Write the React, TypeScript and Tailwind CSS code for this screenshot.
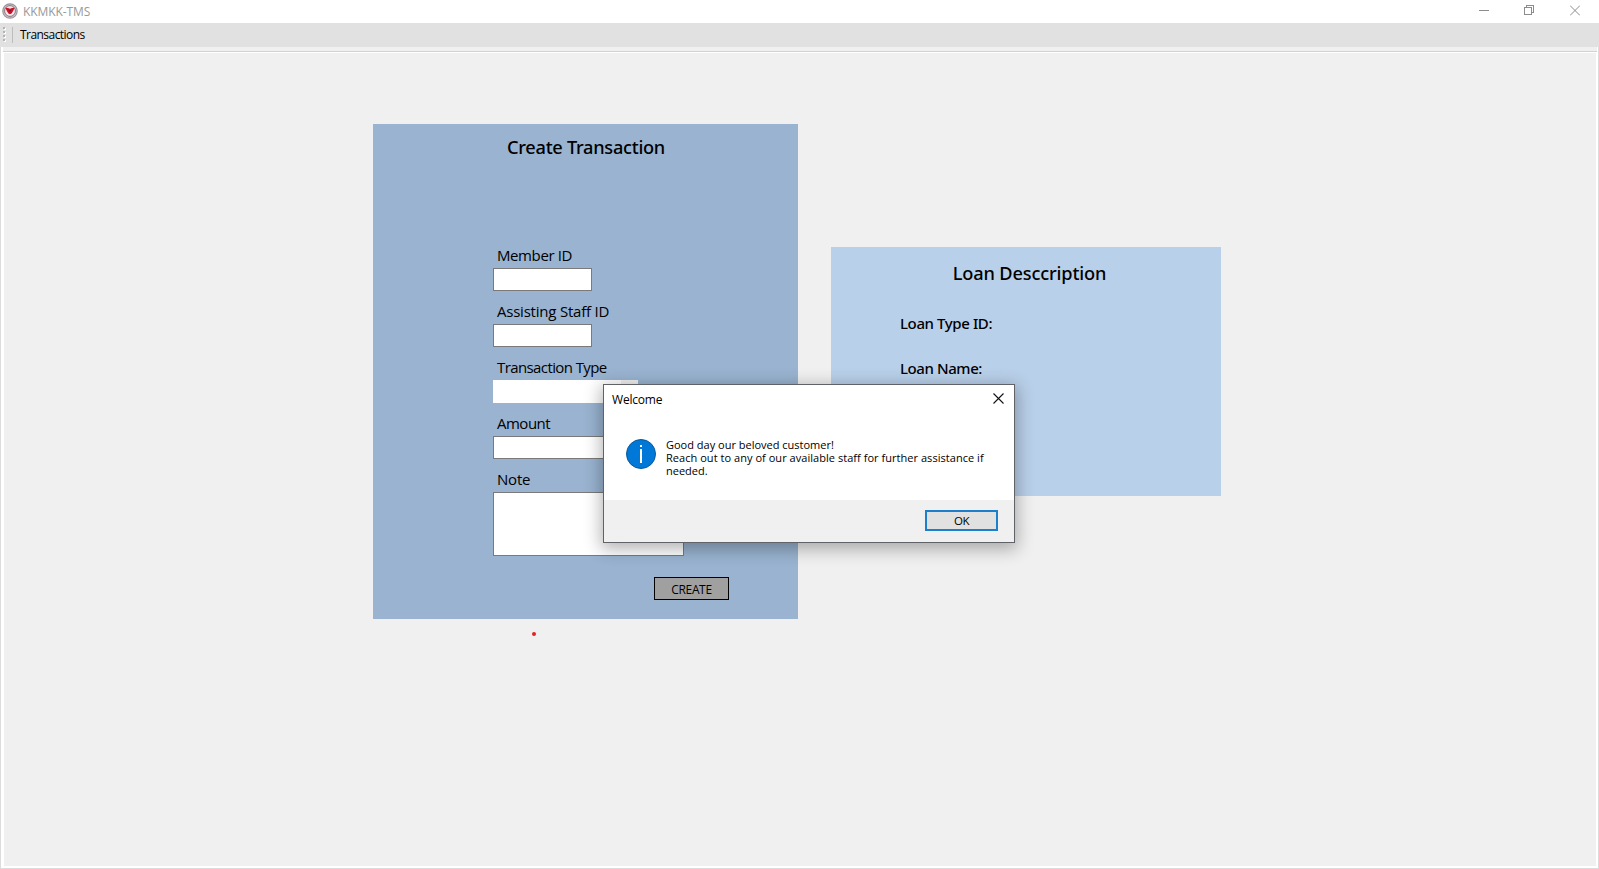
import React from "react";

function TextField({ label, labelClass, children }: { label: string; labelClass: string; children: React.ReactNode }) {
  return (
    <div className="flex flex-col">
      <label className={`h-[22px] pl-1 text-[15px] leading-[18px] whitespace-nowrap ${labelClass}`}>{label}</label>
      {children}
    </div>
  );
}

function AppLogo() {
  return (
    <svg className="size-4" viewBox="0 0 16 16">
      <circle cx="8" cy="8" r="7.2" fill="#c9c7ca" stroke="#98969b" strokeWidth="1.2" />
      <circle cx="8" cy="8" r="5.4" fill="#f1e9ec" stroke="#7d5a66" strokeWidth=".8" />
      <path d="M3.4 4.8 6 5l2 .8L10 5l2.600-.2-1.300 2.900L9.600 10.500 8 11.200l-1.600-.7-1.700-2.800Z" fill="#d01226" />
      <path d="M6.600 6.800 8 7.400l1.400-.6L8.800 8.600H7.200Z" fill="#7a1030" />
    </svg>
  );
}

export default function App() {
  return (
    <div className="relative flex h-[869px] w-[1599px] flex-col overflow-hidden bg-[#f0f0f0] font-['Open_Sans',sans-serif] text-black">
      <header className="flex h-[23px] shrink-0 items-center bg-white pl-[2px]">
        <div className="mb-px">
          <AppLogo />
        </div>
        <h1 className="ml-[5px] text-[12px] leading-4 tracking-[-0.1px] text-[#999]">KKMKK-TMS</h1>
        <div className="mr-[19px] mb-[2px] ml-auto flex items-center text-[#8c8c8c]">
          <svg className="h-[11px] w-[10px]" viewBox="0 0 10 11" fill="none" stroke="currentColor" shapeRendering="crispEdges">
            <path d="M0 5.5h10" />
          </svg>
          <svg className="mr-9 ml-[35px] h-[11px] w-[10px]" viewBox="0 0 10 11" fill="none" stroke="currentColor" shapeRendering="crispEdges">
            <path d="M.5 2.5h7v7h-7zM2.5 2.5v-2h7v7h-2" />
          </svg>
          <svg className="h-[11px] w-[10px]" viewBox="0 0 10 11" fill="none" stroke="currentColor">
            <path d="M0 .5l10 10M10 .5l-10 10" />
          </svg>
        </div>
      </header>

      <nav className="flex h-6 shrink-0 items-center bg-[#e1e1e1] pl-[3px]">
        <svg className="h-4 w-[3px]" viewBox="0 0 3 16" shapeRendering="crispEdges">
          <path d="M1 1h2v2H1zM1 5h2v2H1zM1 9h2v2H1zM1 13h2v2H1z" fill="#fff" />
          <path d="M0 0h2v2H0zM0 4h2v2H0zM0 8h2v2H0zM0 12h2v2H0z" fill="#b4b4b4" />
        </svg>
        <span className="ml-[6px] h-4 w-px bg-[#bdbdbd]" />
        <button className="ml-[7px] text-[12px] leading-4 tracking-[-0.55px]">Transactions</button>
      </nav>

      <div className="flex h-[822px] shrink-0 border-r border-b border-l border-[#dcdcdc] bg-white pr-px pb-[2px] pl-[2px]">
        <main className="flex flex-1 items-start border-t-[4px] border-[#f0f0f0] bg-[#f0f0f0]">
          <div className="flex h-full flex-1 items-start border-t border-[#d2d2d2]">
            <div className="flex h-full flex-1 items-start border-t border-r border-l border-white pt-[71px] pl-[369px]">
              <section className="flex h-[495px] w-[425px] flex-col bg-[#99b3d0]">
                <h2 className="mt-[10px] h-[26px] pl-px text-center font-['Noto_Sans',sans-serif] text-[18.2px] leading-[26px] font-medium tracking-[-0.27px]">
                  Create Transaction
                </h2>
                <div className="mt-[86px] ml-[120px] flex flex-col items-start gap-[11px]">
                  <TextField label="Member ID" labelClass="tracking-[-0.4px]">
                    <div className="h-[23px] w-[99px] border border-[#7a7a7a] bg-white" />
                  </TextField>
                  <TextField label="Assisting Staff ID" labelClass="tracking-[-0.22px]">
                    <div className="h-[23px] w-[99px] border border-[#7a7a7a] bg-white" />
                  </TextField>
                  <TextField label="Transaction Type" labelClass="tracking-[-0.6px]">
                    <div className="flex h-[23px] w-[145px] justify-end bg-white">
                      <div className="w-[17px] bg-[#f0f0f0]" />
                    </div>
                  </TextField>
                  <TextField label="Amount" labelClass="tracking-[-0.5px]">
                    <div className="h-[23px] w-[145px] border border-[#7a7a7a] bg-white" />
                  </TextField>
                  <TextField label="Note" labelClass="tracking-[-0.2px]">
                    <div className="h-16 w-[191px] border border-[#7a7a7a] bg-white" />
                  </TextField>
                </div>
                <button className="mt-[21px] ml-[281px] h-[23px] w-[75px] border border-black bg-[#a0a0a0] pt-[2px] text-[12px] leading-[19px] tracking-[-0.35px]">
                  CREATE
                </button>
              </section>

              <section className="mt-[123px] ml-[33px] flex h-[249px] w-[390px] flex-col bg-[#b9d0ea]">
                <h2 className="mt-[13px] pl-[7px] text-center font-['Noto_Sans',sans-serif] text-[18.2px] leading-[26px] font-medium tracking-[-0.16px]">
                  Loan Desccription
                </h2>
                <p className="mt-[27px] ml-[69px] font-['Noto_Sans',sans-serif] text-[15px] leading-5 font-medium tracking-[-0.4px]">
                  Loan Type ID:
                </p>
                <p className="mt-[25px] ml-[69px] font-['Noto_Sans',sans-serif] text-[15px] leading-5 font-medium tracking-[-0.42px]">
                  Loan Name:
                </p>
              </section>
            </div>
          </div>
        </main>
      </div>

      <span className="absolute top-[632px] left-[532px] size-1 rounded-full bg-[#e22028]" />

      <div
        role="dialog"
        className="absolute top-[384px] left-[603px] flex h-[159px] w-[412px] flex-col border border-[#5f6368] bg-white shadow-[0_4px_16px_2px_rgba(0,0,0,0.3)]"
      >
        <div className="flex h-[30px] items-center justify-between pr-[10px] pl-2">
          <span className="text-[12px] leading-4 tracking-[-0.2px]">Welcome</span>
          <svg className="mb-[3px] size-[11px]" viewBox="0 0 11 11" fill="none" stroke="#111" strokeWidth="1.1">
            <path d="M.5.5l10 10M10.5.5l-10 10" />
          </svg>
        </div>
        <div className="flex h-[85px] items-start pl-[22px]">
          <svg className="mt-6 size-[30px]" viewBox="0 0 30 30">
            <circle cx="15" cy="15" r="14.5" fill="#0078d7" stroke="#0a5a9c" />
            <path d="M14 6h2v2h-2zM14 10h2v14h-2z" fill="#fff" />
          </svg>
          <p className="mt-[23px] ml-[10px] text-[11px] leading-[13px] whitespace-nowrap">
            Good day our beloved customer!
            <br />
            <span className="tracking-[0.04px]">Reach out to any of our available staff for further assistance if</span>
            <br />
            needed.
          </p>
        </div>
        <div className="flex flex-1 items-start justify-end bg-[#f0f0f0] pt-[10px] pr-4">
          <button className="h-[21px] w-[73px] border-2 border-[#1b7fcb] bg-[#e1e1e1] pt-px text-[11.5px] leading-[16px] tracking-[-0.4px]">
            OK
          </button>
        </div>
      </div>
    </div>
  );
}
